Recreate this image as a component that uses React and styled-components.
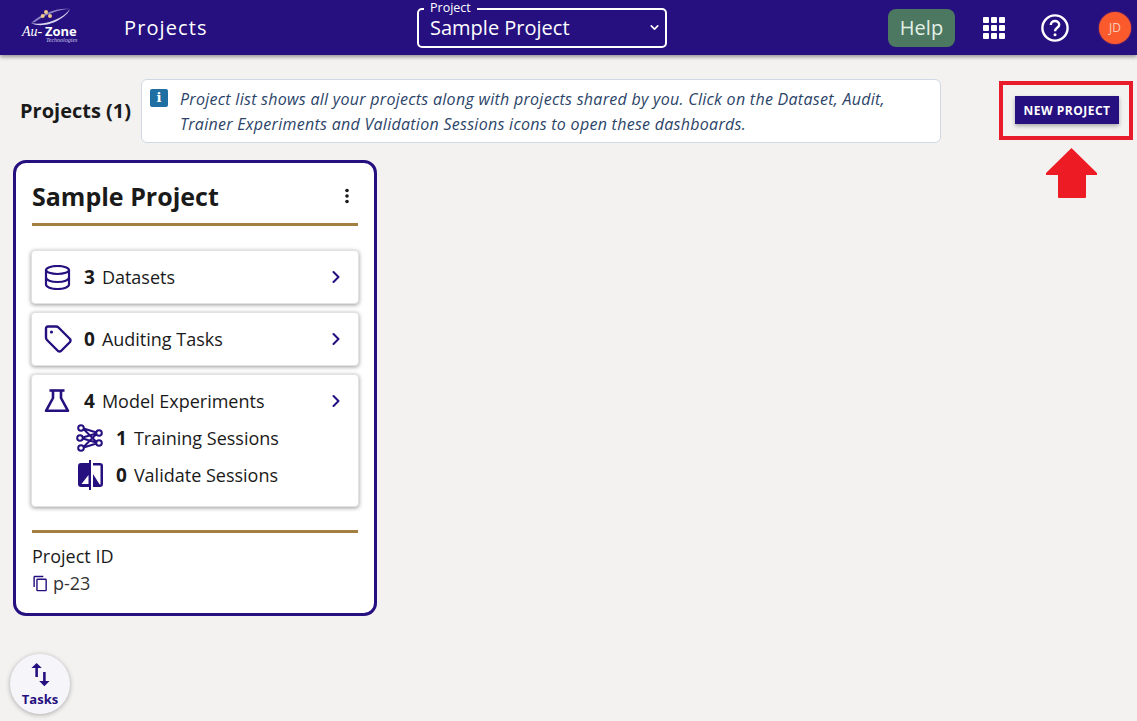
import styled, { createGlobalStyle } from "styled-components";
import { ChevronDown, ChevronRight } from "lucide-react";

const GlobalStyle = createGlobalStyle`
  html, body {
    margin: 0;
    padding: 0;
    background: #f3f2f1;
    font-family: "Open Sans", "Noto Sans", sans-serif;
    color: #1a1a1a;
  }
  * { box-sizing: border-box; }
`;

const Page = styled.div`
  position: relative;
  width: 1137px;
  height: 721px;
  overflow: hidden;
  background: #f3f2f1;
`;

const Header = styled.header`
  height: 55px;
  background: #26107f;
  box-shadow: 0 2px 4px rgba(0, 0, 0, 0.4);
  display: flex;
  align-items: center;
  color: #fff;
`;

const LogoBox = styled.div`
  width: 60px;
  height: 44px;
  margin-left: 20px;
  flex: none;
`;

const HeaderTitle = styled.div`
  margin-left: 44px;
  width: 293px;
  font-size: 20px;
  letter-spacing: 1.1px;
  font-weight: 500;
`;

const ProjectSelect = styled.div`
  position: relative;
  padding: 0 0 0 11px;
  width: 250px;
  height: 40px;
  border: 2px solid #fff;
  border-radius: 5px;
  display: flex;
  align-items: center;
  flex: none;
`;

const SelectLabel = styled.span`
  position: absolute;
  left: 5px;
  top: -10px;
  padding: 0 6px;
  background: #26107f;
  font-size: 12.5px;
  line-height: 15px;
`;

const SelectValue = styled.div`
  font-size: 20px;
  line-height: 24px;
  flex: 1;
  margin-top: 1px;
`;

const SelectArrow = styled(ChevronDown)`
  width: 13px;
  height: 13px;
  margin-right: 4px;
  stroke-width: 3;
`;

const HelpButton = styled.div`
  margin-left: 221px;
  width: 67px;
  height: 38px;
  border-radius: 8px;
  background: #4c7760;
  color: #e3f1e6;
  font-size: 20px;
  display: flex;
  align-items: center;
  justify-content: center;
  flex: none;
`;

const AppsGrid = styled.div`
  margin-left: 28px;
  width: 22px;
  height: 22px;
  display: grid;
  grid-template-columns: repeat(3, 6px);
  grid-auto-rows: 6px;
  gap: 2px;
  flex: none;
`;

const AppsDot = styled.span`
  background: #fff;
  border-radius: 1px;
`;

const HelpIcon = styled.svg`
  margin-left: 35px;
  width: 30px;
  height: 30px;
  flex: none;
`;

const Avatar = styled.div`
  margin-left: 29px;
  width: 32px;
  height: 32px;
  border-radius: 50%;
  background: #fb5a2c;
  box-shadow: 0 0 2px rgba(255, 90, 50, 0.7);
  color: #f6cdbd;
  font-size: 12px;
  display: flex;
  align-items: center;
  justify-content: center;
  flex: none;
`;

const InfoRow = styled.section`
  position: relative;
  display: flex;
  align-items: center;
  padding-left: 20px;
  margin-top: 24px;
  height: 64px;
`;

const CountTitle = styled.h2`
  margin: 0 0 1px 0;
  width: 121px;
  flex: none;
  font-size: 20px;
  font-weight: 700;
  white-space: nowrap;
`;

const InfoBox = styled.div`
  width: 800px;
  height: 64px;
  flex: none;
  padding: 7px 8px 0 8px;
  border: 1px solid #cfd8e3;
  border-radius: 6px;
  background: #fff;
  display: flex;
  gap: 12px;
`;

const InfoBadge = styled.span`
  width: 18px;
  height: 18px;
  margin-top: 2px;
  flex: none;
  border-radius: 2px;
  background: #1f6fa3;
  color: #fff;
  font-family: "DejaVu Serif", serif;
  font-size: 13px;
  font-weight: 700;
  line-height: 18px;
  text-align: center;
`;

const InfoText = styled.p`
  margin: 0;
  font-size: 16px;
  font-style: italic;
  line-height: 25px;
  letter-spacing: 0.28px;
  color: #2b4468;
`;

const Highlight = styled.div`
  margin-left: 58px;
  margin-top: -1px;
  width: 134px;
  height: 59px;
  flex: none;
  border: 4px solid #e81c2a;
  display: flex;
  align-items: center;
  justify-content: center;
`;

const NewProjectButton = styled.button`
  width: 104px;
  height: 28px;
  padding: 0;
  border: 0;
  margin: 0 0 1px 2px;
  background: #26107f;
  color: #fff;
  font-family: inherit;
  font-size: 12px;
  font-weight: 700;
  letter-spacing: 0.5px;
  box-shadow: 0 2px 4px rgba(0, 0, 0, 0.3);
`;

const RedArrow = styled.svg`
  position: absolute;
  left: 1045px;
  top: 68px;
  width: 53px;
  height: 52px;
`;

const CardArea = styled.main`
  padding: 17px 0 0 13px;
`;

const ProjectCard = styled.article`
  width: 364px;
  height: 456px;
  padding: 15px 16px 0 16px;
  background: #fff;
  border: 3px solid #26107f;
  border-radius: 13px;
`;

const CardHead = styled.div`
  display: flex;
  align-items: flex-start;
  justify-content: space-between;
  height: 45px;
`;

const CardTitle = styled.h3`
  margin: 0;
  font-size: 25px;
  font-weight: 700;
  line-height: 36px;
`;

const MoreDots = styled.svg`
  width: 20px;
  height: 20px;
  margin-top: 8px;
  margin-right: 1px;
  fill: #1a1a1a;
`;

const GoldLine = styled.hr`
  margin: ${(p) => p.$top}px 0 0 0;
  height: 3px;
  border: 0;
  background: #a37f42;
  width: 326px;
`;

const Rows = styled.div`
  margin: 24px 0 0 -1px;
  width: 328px;
  display: flex;
  flex-direction: column;
  gap: 8px;
`;

const RowCard = styled.div`
  padding: 0 14px 0 12px;
  background: #fff;
  border-radius: 4px;
  border: 1px solid #e2e2e2;
  box-shadow: 0 1px 4px rgba(0, 0, 0, 0.4);
`;

const RowMain = styled.div`
  height: 52px;
  display: flex;
  align-items: center;
`;

const IconSlot = styled.span`
  width: 40px;
  display: flex;
  color: #26107f;
  flex: none;
`;

const RowLabel = styled.span`
  flex: 1;
  font-size: 18px;
`;

const Count = styled.b`
  font-weight: 700;
  font-size: 19px;
  margin-right: 7px;
`;

const Arrow = styled(ChevronRight)`
  width: 20px;
  height: 20px;
  color: #26107f;
  stroke-width: 2.5;
  margin-right: -2px;
`;

const SubRow = styled.div`
  height: 37px;
  display: flex;
  align-items: center;
  padding-left: 32px;
`;

const ExperimentBody = styled.div`
  margin-top: -8px;
  padding-bottom: 13px;
`;

const IdLabel = styled.div`
  margin-top: 11px;
  font-size: 18px;
  line-height: 25px;
`;

const IdValue = styled.div`
  margin-top: 2px;
  display: flex;
  align-items: center;
  gap: 4px;
  font-size: 18px;
  line-height: 25px;
  color: #333;
`;

const CopyIcon = styled.svg`
  width: 17px;
  height: 17px;
  fill: #26107f;
`;

const TasksButton = styled.div`
  position: absolute;
  left: 10px;
  top: 654px;
  width: 60px;
  height: 60px;
  border-radius: 50%;
  background: #f6f6fa;
  box-shadow: 0 1px 5px rgba(0, 0, 0, 0.3);
  display: flex;
  flex-direction: column;
  align-items: center;
  color: #26107f;
`;

const TasksIcon = styled.svg`
  width: 31px;
  height: 31px;
  margin-top: 5px;
  fill: currentColor;
  flex: none;
`;

const TasksLabel = styled.span`
  font-size: 13px;
  font-weight: 700;
  line-height: 16px;
  margin-top: 1px;
`;

const LogoSvg = () => (
  <svg width="60" height="44" viewBox="0 0 60 44">
    <path d="M11 17 C20 8 38 1 50 3 C40 3 24 9 15 16 Z" fill="#8a80c4" />
    <path d="M11 17 C22 20 42 14 50 3 C46 13 24 24 11 17 Z" fill="#d8d5ee" />
    <circle cx="26" cy="6" r="2" fill="#efc98a" />
    <circle cx="22.7" cy="10" r="2" fill="#efc98a" />
    <circle cx="30" cy="10" r="2" fill="#efc98a" />
    <text x="2" y="29.5" fill="#fff" fontFamily="Liberation Serif, serif" fontStyle="italic" fontSize="14">Au-</text>
    <text x="25" y="29.5" fill="#fff" fontFamily="Open Sans, sans-serif" fontWeight="700" fontSize="13">Zone</text>
    <text x="26" y="35.5" fill="#cfc9ea" fontFamily="Liberation Serif, serif" fontStyle="italic" fontSize="6">Technologies</text>
  </svg>
);

const DatabaseIcon = () => (
  <svg width="27" height="25" viewBox="0 0 27 25" fill="none" stroke="currentColor" strokeWidth="2.2">
    <ellipse cx="13.5" cy="5" rx="11.5" ry="4" />
    <path d="M2 5 V19.5 C2 22 7 24 13.5 24 C20 24 25 22 25 19.5 V5" />
    <path d="M2 12.5 C2 15 7 17 13.5 17 C20 17 25 15 25 12.5" />
  </svg>
);

const TagIcon = () => (
  <svg width="28" height="28" viewBox="0 0 28 28" fill="none" stroke="currentColor" strokeWidth="2.4" strokeLinejoin="round">
    <path d="M2 3.5 Q2 1.5 4 1.5 H12 Q13.5 1.5 14.5 2.5 L26 14 Q27 15.5 26 17 L17 26 Q15.5 27 14 26 L3 15 Q2 14 2 12.5 Z" />
    <circle cx="7.5" cy="7" r="1.6" fill="currentColor" stroke="none" />
  </svg>
);

const FlaskIcon = () => (
  <svg width="26" height="24" viewBox="0 0 26 24" fill="none" stroke="currentColor" strokeWidth="2.6" strokeLinejoin="round">
    <path d="M5.5 1.5 H20.5" />
    <path d="M9 1.5 V9 L2 21.8 H24 L17 9 V1.5" />
  </svg>
);

const TrainIcon = () => (
  <svg width="28" height="28" viewBox="0 0 28 28" fill="none" stroke="currentColor" strokeWidth="2">
    <circle cx="5" cy="4" r="2.8" />
    <circle cx="4" cy="14" r="2.8" />
    <circle cx="5" cy="24" r="2.8" />
    <circle cx="23" cy="9" r="2.8" />
    <circle cx="23" cy="19" r="2.8" />
    <path d="M7.5 5 L20.5 18 M7.5 4.5 L20.5 8.5 M6.7 13.5 L20.3 9.5 M6.7 14.5 L20.3 18.5 M7.5 23.5 L20.5 19.5 M7.5 23 L20.5 10" />
  </svg>
);

const ValidateIcon = () => (
  <svg width="28" height="30" viewBox="0 0 28 30" fill="#26107f">
    <path d="M13 3 H5 Q2 3 2 6 V24 Q2 27 5 27 H13 Z" />
    <path d="M12.5 15 V24 H5.5 Z" fill="#fff" />
    <rect x="13" y="0" width="2" height="30" />
    <path d="M17 3 H24 Q27 3 27 6 V24 Q27 27 24 27 H17 V24.5 H24.5 V5.5 H17 Z" />
    <path d="M17 25 V14 L24 25 Z" />
  </svg>
);

const apps = Array.from({ length: 9 });

export default function App() {
  return (
    <Page>
      <GlobalStyle />
      <Header>
        <LogoBox>
          <LogoSvg />
        </LogoBox>
        <HeaderTitle>Projects</HeaderTitle>
        <ProjectSelect>
          <SelectLabel>Project</SelectLabel>
          <SelectValue>Sample Project</SelectValue>
          <SelectArrow />
        </ProjectSelect>
        <HelpButton>Help</HelpButton>
        <AppsGrid>
          {apps.map((_, i) => (
            <AppsDot key={i} />
          ))}
        </AppsGrid>
        <HelpIcon viewBox="0 0 30 30" fill="none" stroke="#fff">
          <circle cx="15" cy="15" r="12.6" strokeWidth="2.4" />
          <path d="M10.8 12 C10.8 9.5 12.7 8 15 8 C17.4 8 19.2 9.6 19.2 11.7 C19.2 14.8 15 14.8 15 18.3" strokeWidth="2.4" />
          <circle cx="15" cy="21.7" r="1.5" fill="#fff" stroke="none" />
        </HelpIcon>
        <Avatar>JD</Avatar>
      </Header>

      <InfoRow>
        <CountTitle>Projects (1)</CountTitle>
        <InfoBox>
          <InfoBadge>i</InfoBadge>
          <InfoText>
            Project list shows all your projects along with projects shared by you. Click on the Dataset, Audit,
            <br />
            Trainer Experiments and Validation Sessions icons to open these dashboards.
          </InfoText>
        </InfoBox>
        <Highlight>
          <NewProjectButton>NEW PROJECT</NewProjectButton>
        </Highlight>
        <RedArrow viewBox="0 0 53 52">
          <path d="M26.5 1 L52 26 L52 28 L41 28 L41 50 Q41 51 40 51 L14 51 Q13 51 13 50 L13 28 L1 28 L1 26 Z" fill="#ed1c24" />
        </RedArrow>
      </InfoRow>

      <CardArea>
        <ProjectCard>
          <CardHead>
            <CardTitle>Sample Project</CardTitle>
            <MoreDots viewBox="0 0 20 20">
              <circle cx="10" cy="4.5" r="1.8" />
              <circle cx="10" cy="10" r="1.8" />
              <circle cx="10" cy="15.5" r="1.8" />
            </MoreDots>
          </CardHead>
          <GoldLine $top={0} />
          <Rows>
            <RowCard>
              <RowMain>
                <IconSlot>
                  <DatabaseIcon />
                </IconSlot>
                <RowLabel>
                  <Count>3</Count>Datasets
                </RowLabel>
                <Arrow />
              </RowMain>
            </RowCard>
            <RowCard>
              <RowMain>
                <IconSlot>
                  <TagIcon />
                </IconSlot>
                <RowLabel>
                  <Count>0</Count>Auditing Tasks
                </RowLabel>
                <Arrow />
              </RowMain>
            </RowCard>
            <RowCard>
              <RowMain>
                <IconSlot>
                  <FlaskIcon />
                </IconSlot>
                <RowLabel>
                  <Count>4</Count>Model Experiments
                </RowLabel>
                <Arrow />
              </RowMain>
              <ExperimentBody>
                <SubRow>
                  <IconSlot>
                    <TrainIcon />
                  </IconSlot>
                  <RowLabel>
                    <Count>1</Count>Training Sessions
                  </RowLabel>
                </SubRow>
                <SubRow>
                  <IconSlot>
                    <ValidateIcon />
                  </IconSlot>
                  <RowLabel>
                    <Count>0</Count>Validate Sessions
                  </RowLabel>
                </SubRow>
              </ExperimentBody>
            </RowCard>
          </Rows>
          <GoldLine $top={23} />
          <IdLabel>Project ID</IdLabel>
          <IdValue>
            <CopyIcon viewBox="0 0 24 24">
              <path d="M16 1H4c-1.1 0-2 .9-2 2v14h2V3h12V1zm3 4H8c-1.1 0-2 .9-2 2v14c0 1.1.9 2 2 2h11c1.1 0 2-.9 2-2V7c0-1.1-.9-2-2-2zm0 16H8V7h11v14z" />
            </CopyIcon>
            p-23
          </IdValue>
        </ProjectCard>
      </CardArea>

      <TasksButton>
        <TasksIcon viewBox="0 0 24 24">
          <path d="M16 17.01V10h-2v7.01h-3L15 21l4-3.99h-3zM9 3 5 6.99h3V14h2V6.99h3L9 3z" />
        </TasksIcon>
        <TasksLabel>Tasks</TasksLabel>
      </TasksButton>
    </Page>
  );
}
